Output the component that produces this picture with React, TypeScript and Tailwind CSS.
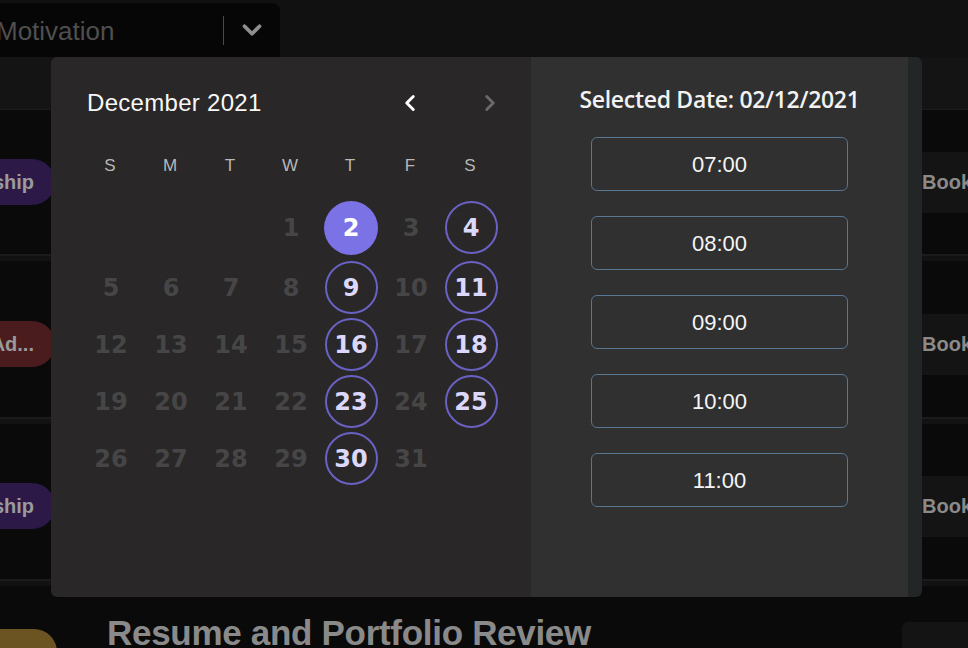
import React from 'react';
import { ChevronDown, ChevronLeft, ChevronRight } from 'lucide-react';

const weekdays = ['S', 'M', 'T', 'W', 'T', 'F', 'S'];
const available = [2, 4, 9, 11, 16, 18, 23, 25, 30];
const selectedDay = 2;
const slots = ['07:00', '08:00', '09:00', '10:00', '11:00'];

// December 2021 starts on a Wednesday
const buildWeeks = () => {
  const cells: (number | null)[] = [null, null, null];
  for (let d = 1; d <= 31; d++) cells.push(d);
  const weeks: (number | null)[][] = [];
  for (let i = 0; i < cells.length; i += 7) weeks.push(cells.slice(i, i + 7));
  return weeks;
};

const DayCell: React.FC<{ day: number | null }> = ({ day }) => {
  if (day === null) return <div className="w-[60px] h-[53px]" />;
  const isSelected = day === selectedDay;
  const isAvailable = available.includes(day);
  return (
    <div className="w-[60px] h-[53px] flex items-center justify-center">
      <div
        className={
          isSelected
            ? 'w-[54px] h-[54px] rounded-full bg-[#7b73e5] text-white flex items-center justify-center'
            : isAvailable
            ? 'w-[53px] h-[53px] rounded-full border-2 border-[#6a62c3] text-[#dcd8fc] flex items-center justify-center'
            : 'w-[53px] h-[53px] rounded-full text-[#474647] flex items-center justify-center'
        }
      >
        <span className="font-['DejaVu_Sans',sans-serif] font-bold text-[24px] leading-none">{day}</span>
      </div>
    </div>
  );
};

const Pill: React.FC<{ label: string; color: string }> = ({ label, color }) => (
  <div className={`h-[46px] w-[76px] -ml-[21px] rounded-full ${color} flex items-center justify-end pr-[21px]`}>
    <span className="text-[20px] font-bold text-[#9a9a9a] whitespace-nowrap">{label}</span>
  </div>
);

const BookBox: React.FC = () => (
  <div className="ml-auto w-[66px] h-[61px] bg-[#141414] rounded-l-md flex items-center pl-[20px] overflow-hidden">
    <span className="text-[20px] font-bold text-[#8a8a8a] whitespace-nowrap">Book</span>
  </div>
);

const Separator: React.FC = () => (
  <div className="h-[7px] bg-[#121212] border-t-2 border-[#1b1b1b]" />
);

export default function App() {
  const weeks = buildWeeks();

  return (
    <div className="relative w-[968px] h-[648px] overflow-hidden bg-[#0a0a0a] font-['Liberation_Sans',Arial,sans-serif]">
      {/* Top bar with the category select */}
      <div className="h-[57px] bg-[#111111] pt-[3px]">
        <div className="w-[280px] h-[54px] bg-[#060606] rounded-tr-lg flex items-center">
          <span className="-ml-[4px] mt-[2px] text-[26px] text-[#4f4f4f]">Motivation</span>
          <div className="ml-auto w-px h-[29px] bg-[#4a4a4a]" />
          <div className="w-[56px] flex justify-center">
            <ChevronDown size={30} strokeWidth={3} className="text-[#8f8f8f]" />
          </div>
        </div>
      </div>

      {/* Table header band */}
      <div className="h-[53px] bg-[#141414] border-b border-[#1b1b1b]" />

      {/* Rows */}
      <div className="h-[144px] flex items-center">
        <Pill label="ship" color="bg-[#2c1947]" />
        <BookBox />
      </div>
      <Separator />
      <div className="h-[156px] flex items-center pt-[10px]">
        <Pill label="Ad..." color="bg-[#4a1c1d]" />
        <BookBox />
      </div>
      <Separator />
      <div className="h-[155px] flex items-center pt-[9px]">
        <Pill label="ship" color="bg-[#2c1947]" />
        <BookBox />
      </div>
      <Separator />
      <div className="h-[61px] flex items-start">
        <div className="mt-[43px] h-[46px] w-[78px] -ml-[21px] rounded-full bg-[#6b5322]" />
        <div className="ml-[50px] mt-[29px] text-[35px] font-bold tracking-[-0.3px] text-[#8a8a8a] leading-none whitespace-nowrap">
          Resume and Portfolio Review
        </div>
        <div className="ml-auto mt-[36px] w-[66px] h-[40px] bg-[#141414] rounded-tl-md" />
      </div>

      {/* Booking modal */}
      <div className="absolute left-[51px] top-[57px] w-[871px] h-[540px] rounded-md overflow-hidden flex">
        {/* Calendar */}
        <div className="w-[480px] bg-[#292728] pt-[26px]">
          <div className="h-[40px] flex items-center pl-[36px] pr-[28px]">
            <span className="text-[24px] text-[#f7f7f7] tracking-[0.3px]">December&nbsp;2021</span>
            <div className="ml-auto flex items-center gap-[54px]">
              <ChevronLeft size={26} strokeWidth={2.7} className="text-white" />
              <ChevronRight size={26} strokeWidth={2.7} className="text-[#6a6a6a]" />
            </div>
          </div>
          <div className="mt-[31px] ml-[29px] flex h-[24px] items-center">
            {weekdays.map((w, i) => (
              <div key={i} className="w-[60px] text-center text-[17px] text-[#b8b8b8]">
                {w}
              </div>
            ))}
          </div>
          <div className="mt-[23px] ml-[30px] flex flex-col">
            {weeks.map((week, wi) => (
              <div key={wi} className={wi === 0 ? 'flex' : wi === 1 ? 'flex mt-[7px]' : 'flex mt-[4px]'}>
                {week.map((d, di) => (
                  <DayCell key={di} day={d} />
                ))}
              </div>
            ))}
          </div>
        </div>

        {/* Time slots */}
        <div className="w-[377px] bg-[#303030] pt-[27px] flex flex-col items-center">
          <div className="h-[30px] flex items-center text-[23px] font-semibold text-[#f2f2f2] font-['Open_Sans',sans-serif] tracking-[-0.3px]">
            Selected Date: 02/12/2021
          </div>
          <div className="mt-[23px] flex flex-col gap-[25px]">
            {slots.map((s) => (
              <button
                key={s}
                className="w-[257px] h-[54px] rounded-md border border-[#587592] bg-transparent text-[22px] text-[#f5f5f5] flex items-center justify-center"
              >
                {s}
              </button>
            ))}
          </div>
        </div>

        {/* Scroll track */}
        <div className="w-[14px] bg-[#232627]" />
      </div>
    </div>
  );
}
